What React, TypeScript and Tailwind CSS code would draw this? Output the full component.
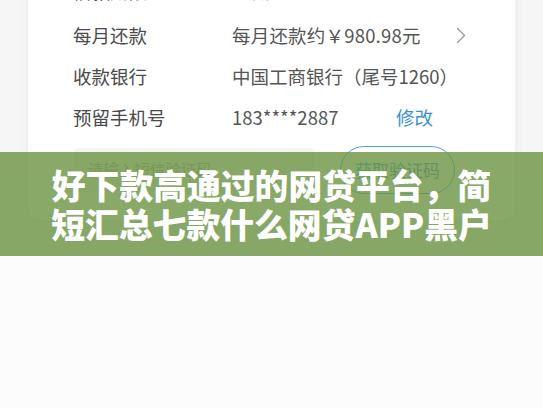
import React from 'react';

const rows: { label: string; value: React.ReactNode; cls: string }[] = [
  { label: '借款期限', value: '12期', cls: 'items-start pt-[8px]' },
  {
    label: '每月还款',
    cls: 'items-center',
    value: (
      <span className="flex items-center">
        <span className="w-[224px] tracking-[0.2px]">每月还款约￥980.98元</span>
        <svg className="h-[17px] w-[10px]" viewBox="0 0 10 17" fill="none">
          <path d="M1.5 1.5l7 7-7 7" stroke="#9b9b9b" strokeWidth="1.4" strokeLinecap="round" strokeLinejoin="round" />
        </svg>
      </span>
    ),
  },
  { label: '收款银行', value: '中国工商银行（尾号1260）', cls: 'items-center' },
  {
    label: '预留手机号',
    cls: 'items-center',
    value: (
      <span className="flex items-center">
        <span className="w-[164px]">183****2887</span>
        <span className="text-[#3b8fd1]">修改</span>
      </span>
    ),
  },
];

const App: React.FC = () => {
  return (
    <div className="w-[543px] h-[408px] overflow-hidden bg-[#fcfcfc] font-['Noto_Sans_CJK_SC','Noto_Sans',sans-serif]">
      <div className="relative h-[256px] bg-[#f6f6f6] px-[28px] overflow-hidden">
        {/* loan form card */}
        <div className="-mt-[30px] h-[250px] rounded-b-xl bg-white pl-[45px] pr-[20px] pt-[4px] shadow-[0_2px_12px_rgba(0,0,0,0.05)]">
          {rows.map(row => (
            <div key={row.label} className={`flex h-[41px] ${row.cls} text-[18.5px] leading-none`}>
              <span className="w-[159px] shrink-0 text-[#4a4a4a]">{row.label}</span>
              <span className="text-[#555]">{row.value}</span>
            </div>
          ))}
          <div className="mt-[8px] flex items-center">
            <div className="flex h-[44px] w-[242px] items-center rounded-md bg-[#f4f4f4] pl-[15px] text-[15.5px] text-[#a5a5a5]">
              请输入短信验证码
            </div>
            <div className="ml-[25px] flex h-[48px] w-[115px] items-center justify-center rounded-full border-[1.5px] border-[#4ea3dd] text-[17px] text-[#3d8ccf]">
              获取验证码
            </div>
          </div>
        </div>

        {/* title banner */}
        <div className="absolute inset-x-0 top-[152px] flex h-[104px] items-center justify-center bg-[rgba(108,148,68,0.8)]">
          <h1 className="text-center text-[33.8px] font-black leading-[39px] text-white">
            好下款高通过的网贷平台，简
            <br />
            短汇总七款什么网贷APP黑户
          </h1>
        </div>
      </div>
    </div>
  );
};

export default App;
